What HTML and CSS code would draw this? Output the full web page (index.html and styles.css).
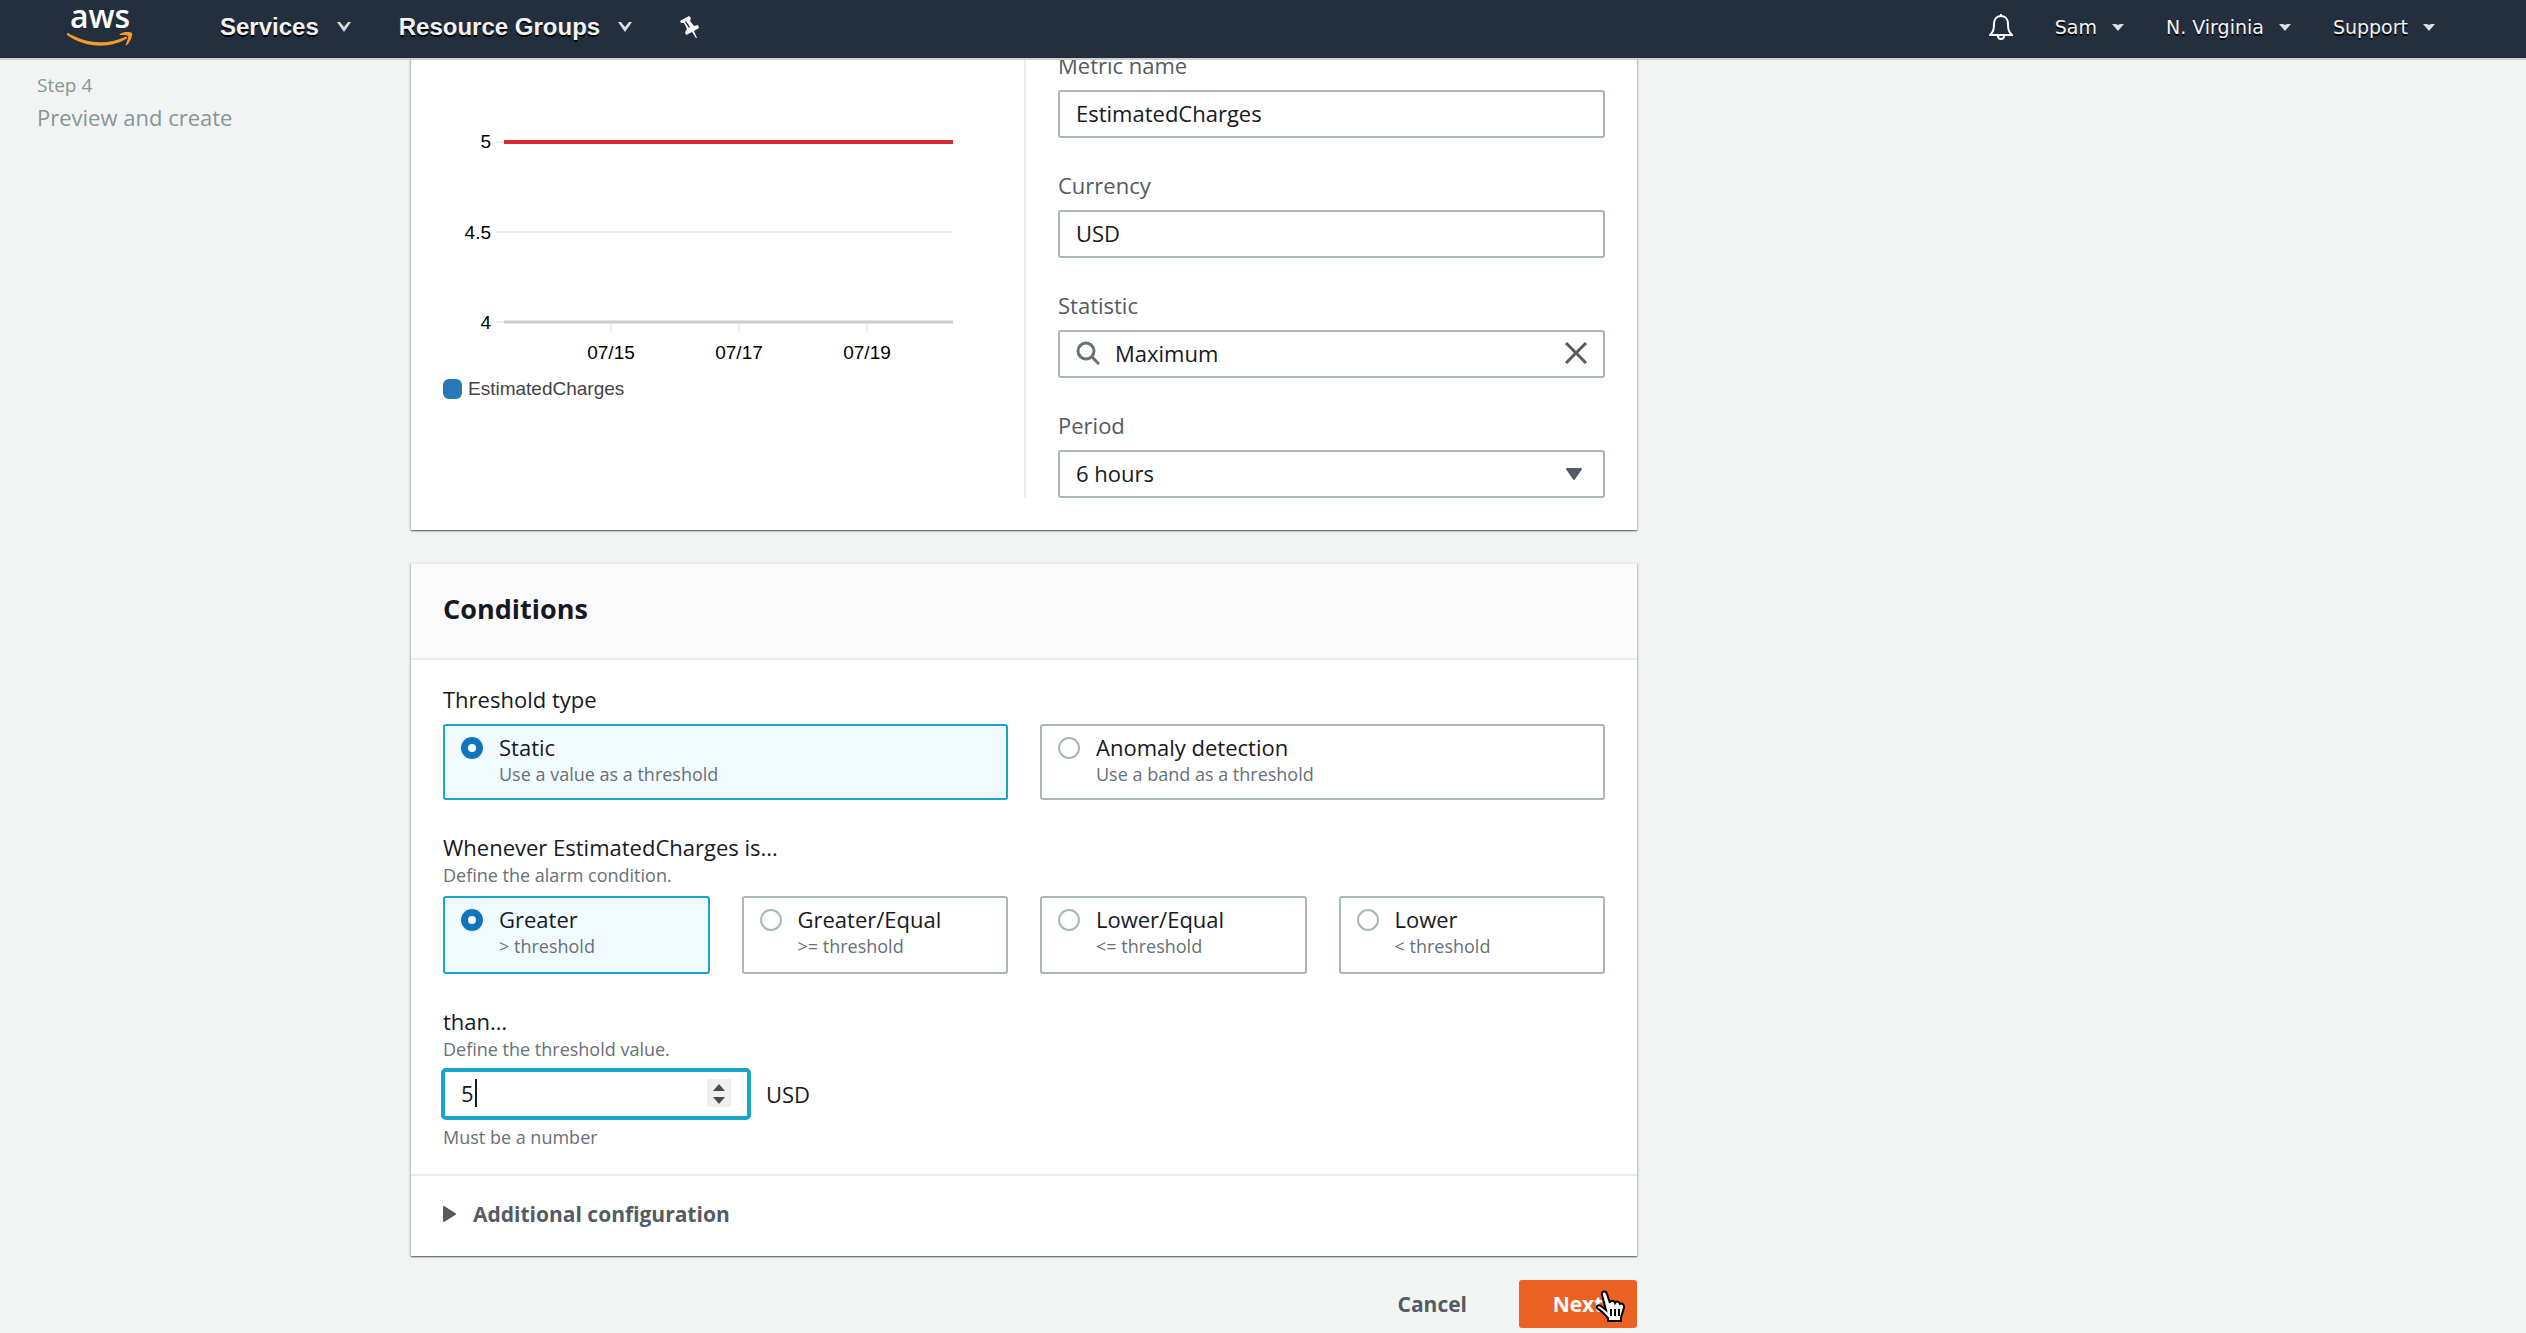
FILE: index.html
```html
<!DOCTYPE html>
<html lang="en">
<head>
<meta charset="utf-8">
<title>Create alarm</title>
<link rel="stylesheet" href="styles.css">
</head>
<body>
<header class="topnav">
  <a class="logo" href="#" aria-label="AWS home">
    <span class="logo-word">aws</span>
    <svg class="logo-smile" viewBox="0 0 66 16" aria-hidden="true"><path d="M1 1C20 12 40 13 58 5c2-1 3 1 1 2C42 17 18 16 0 3c-1-1 0-2 1-2z"/><path d="M53 2c4-3 11-2 12-1s-1 8-5 12c-1 1-2 0-1-1 1-3 3-7 2-8s-5-1-7-1c-1 0-2 0-1-1z"/></svg>
  </a>
  <nav class="nav-main">
    <button class="nav-item" type="button">Services<svg class="caret" viewBox="0 0 14 10" aria-hidden="true"><path d="M0 0h3l4 5 4-5h3L7 10z"/></svg></button>
    <button class="nav-item" type="button">Resource Groups<svg class="caret" viewBox="0 0 14 10" aria-hidden="true"><path d="M0 0h3l4 5 4-5h3L7 10z"/></svg></button>
    <button class="pin" type="button" aria-label="Pin shortcuts"><svg viewBox="0 0 20 22" aria-hidden="true"><path fill-rule="evenodd" d="M0 5L9 0l2 2-1 3 4 5 4-1 1 3-5 3 3 7-1 0-4-6-6 3-1-3 2-3-3-6-3 0zM5 6l4 6 1-1-4-6z"/></svg></button>
  </nav>
  <nav class="nav-side">
    <button class="bell" type="button" aria-label="Notifications"><svg viewBox="0 0 24 26" aria-hidden="true"><path d="M12 2c-5 0-7 4-7 8 0 6-1 8-4 11h22c-3-3-4-5-4-11 0-4-2-8-7-8zM12 0v2M9 22c0 4 6 4 6 0"/></svg></button>
    <button class="nav-link" type="button">Sam<svg class="caret-small" viewBox="0 0 12 7" aria-hidden="true"><path d="M0 0h4l2 1 2-1h4L6 7z"/></svg></button>
    <button class="nav-link" type="button">N. Virginia<svg class="caret-small" viewBox="0 0 12 7" aria-hidden="true"><path d="M0 0h4l2 1 2-1h4L6 7z"/></svg></button>
    <button class="nav-link" type="button">Support<svg class="caret-small" viewBox="0 0 12 7" aria-hidden="true"><path d="M0 0h4l2 1 2-1h4L6 7z"/></svg></button>
  </nav>
</header>

<div class="page">
  <aside class="steps">
    <div class="step-number">Step 4</div>
    <div class="step-name">Preview and create</div>
  </aside>

  <main class="content">
    <section class="card metric">
      <div class="graph">
        <svg class="chart" viewBox="0 0 520 320" role="img" aria-label="EstimatedCharges over time">
          <path class="grid" d="M53 92h8M53 182h457M53 272h8M168 274v8M296 274v8M424 274v8"/>
          <path class="axis" d="M61 272h449"/>
          <path class="threshold" d="M61 92h449"/>
          <g class="y-labels"><text x="48" y="98">5</text><text x="48" y="189">4.5</text><text x="48" y="279">4</text></g>
          <g class="x-labels"><text x="168" y="309">07/15</text><text x="296" y="309">07/17</text><text x="424" y="309">07/19</text></g>
        </svg>
        <div class="legend"><span class="swatch"></span>EstimatedCharges</div>
      </div>
      <div class="metric-form">
        <div class="field">
          <label for="metric">Metric name</label>
          <input class="control" id="metric" type="text" value="EstimatedCharges">
        </div>
        <div class="field">
          <label for="currency">Currency</label>
          <input class="control" id="currency" type="text" value="USD">
        </div>
        <div class="field">
          <label for="statistic">Statistic</label>
          <div class="control search">
            <svg class="search-icon" viewBox="0 0 24 24" aria-hidden="true"><circle cx="10" cy="10" r="8"/><path d="M16 16l7 7"/></svg>
            <input id="statistic" type="text" value="Maximum">
            <button class="clear" type="button" aria-label="Clear"><svg viewBox="0 0 22 22" aria-hidden="true"><path d="M1 1l20 20M21 1L1 21"/></svg></button>
          </div>
        </div>
        <div class="field">
          <label for="period">Period</label>
          <select class="control" id="period"><option>6 hours</option></select>
        </div>
      </div>
    </section>

    <section class="card conditions">
      <h2 class="card-title">Conditions</h2>
      <div class="card-body">
        <fieldset class="group">
          <legend class="label">Threshold type</legend>
          <div class="tiles two">
            <label class="tile"><input type="radio" name="type" checked><span><span class="tile-title">Static</span><span class="hint">Use a value as a threshold</span></span></label>
            <label class="tile"><input type="radio" name="type"><span><span class="tile-title">Anomaly detection</span><span class="hint">Use a band as a threshold</span></span></label>
          </div>
        </fieldset>
        <fieldset class="group">
          <legend class="label">Whenever EstimatedCharges is...<span class="hint">Define the alarm condition.</span></legend>
          <div class="tiles four">
            <label class="tile"><input type="radio" name="operator" checked><span><span class="tile-title">Greater</span><span class="hint">&gt; threshold</span></span></label>
            <label class="tile"><input type="radio" name="operator"><span><span class="tile-title">Greater/Equal</span><span class="hint">&gt;= threshold</span></span></label>
            <label class="tile"><input type="radio" name="operator"><span><span class="tile-title">Lower/Equal</span><span class="hint">&lt;= threshold</span></span></label>
            <label class="tile"><input type="radio" name="operator"><span><span class="tile-title">Lower</span><span class="hint">&lt; threshold</span></span></label>
          </div>
        </fieldset>
        <div class="group">
          <label class="label" for="value">than…<span class="hint">Define the threshold value.</span></label>
          <div class="value-row">
            <div class="control number">
              <input id="value" type="text" inputmode="numeric" value="5">
              <span class="text-caret"></span>
              <button class="spinner" type="button" aria-label="Change value"><svg viewBox="0 0 24 28" aria-hidden="true"><path d="M6 12l6-7 6 7zM6 18l6 7 6-7z"/></svg></button>
            </div>
            <span>USD</span>
          </div>
          <span class="hint">Must be a number</span>
        </div>
      </div>
      <button class="expander" type="button"><svg viewBox="0 0 14 16" aria-hidden="true"><path d="M1 1v14l11-7z"/></svg>Additional configuration</button>
    </section>

    <div class="actions">
      <button class="cancel" type="button">Cancel</button>
      <button class="next" type="button">Next
        <svg class="pointer" viewBox="0 0 31 34" aria-hidden="true"><path d="M11 20L7 5c-1-4 4-5 5-1l3 9c0-3 4-3 5 0 1-2 4-2 5 1 2-1 4 0 4 3-1 6-3 8-3 11v3H13v-3c-3-3-6-7-10-9-3-2 0-5 3-3z"/><path class="pointer-lines" d="M16 19v7M20 19v7M24 19v7"/></svg>
      </button>
    </div>
  </main>
</div>
</body>
</html>
```
FILE: styles.css
```css
* {
  box-sizing: border-box;
}

body {
  margin: 0;
  background: #f2f4f4;
  color: #16191f;
  font: 22px/30px "Open Sans", "Noto Sans", sans-serif;
}

button,
input,
select {
  font: inherit;
  color: inherit;
}

button {
  padding: 0;
  border: 0;
  background: none;
}

svg {
  display: block;
}

/* Top navigation */
.topnav {
  position: sticky;
  top: 0;
  z-index: 2;
  display: flex;
  height: 60px;
  padding: 0 91px 0 67px;
  border-bottom: 2px solid #cfcfcf;
  background: #232f3e;
  color: #f2f2f2;
}

.logo {
  width: 66px;
  margin-right: 87px;
  color: #fff;
  text-align: center;
  text-decoration: none;
}

.logo-word {
  display: block;
  font: 600 32px/32px "Open Sans", sans-serif;
}

.logo-smile {
  width: 66px;
  height: 16px;
  fill: #f79a2d;
}

.nav-main,
.nav-side {
  display: flex;
  align-items: center;
  height: 54px;
}

.nav-side {
  margin-left: auto;
  gap: 42px;
}

.nav-item,
.nav-link {
  display: flex;
  align-items: center;
  text-shadow: 0 2px 0 #000;
}

.nav-item {
  gap: 18px;
  margin-right: 48px;
  font: bold 24px/28px "Liberation Sans", Arial, sans-serif;
}

.nav-link {
  gap: 15px;
  font: 19px/24px "DejaVu Sans", Verdana, sans-serif;
}

.caret {
  width: 14px;
  height: 10px;
  fill: #ddd;
}

.caret-small {
  width: 12px;
  height: 7px;
  fill: #ddd;
}

.pin svg {
  width: 20px;
  height: 22px;
  fill: #fff;
}

.bell svg {
  width: 24px;
  height: 26px;
  fill: none;
  stroke: #fff;
  stroke-width: 2;
}

/* Page frame: the content scrolls beneath the navigation bar */
.page {
  display: grid;
  grid-template-columns: 411px minmax(0, 1226px);
  margin-top: -60px;
}

.steps {
  padding: 70px 37px;
  color: #879596;
}

.step-number {
  font-size: 19px;
  line-height: 30px;
}

.step-name {
  line-height: 34px;
}

.card {
  margin-bottom: 33px;
  background: #fff;
  box-shadow: 0 1px 1px rgba(0, 28, 36, .4), 1px 1px 2px rgba(0, 28, 36, .2), -1px 1px 2px rgba(0, 28, 36, .2);
}

/* Metric card */
.metric {
  display: grid;
  grid-template-columns: 1fr 1fr;
  padding: 50px 32px 32px;
}

.chart {
  width: 520px;
  height: 320px;
  fill: none;
}

.grid {
  stroke: #eee;
  stroke-width: 2;
}

.axis {
  stroke: #ccc;
  stroke-width: 3;
}

.threshold {
  stroke: #d62a2f;
  stroke-width: 4;
}

.chart text,
.legend {
  font: 19px/24px "Liberation Sans", Arial, sans-serif;
}

.chart text {
  fill: #000;
}

.y-labels {
  text-anchor: end;
}

.x-labels {
  text-anchor: middle;
}

.legend {
  display: flex;
  align-items: center;
  gap: 6px;
  margin-top: 7px;
  color: #444;
}

.swatch {
  width: 19px;
  height: 20px;
  border-radius: 6px;
  background: #2878b5;
}

.metric-form {
  display: flex;
  flex-direction: column;
  gap: 32px;
  padding-left: 32px;
  border-left: 2px solid #eaeded;
}

.field {
  display: flex;
  flex-direction: column;
  gap: 10px;
}

.field label {
  color: #545b64;
}

.control {
  width: 100%;
  height: 48px;
  padding: 0 16px 2px;
  border: 2px solid #aab7b8;
  border-radius: 3px;
  background: #fff;
}

.search,
.number {
  display: flex;
  align-items: center;
}

.search input,
.number input {
  min-width: 0;
  padding: 0;
  border: 0;
  outline: 0;
  background: none;
}

.search input {
  flex: 1;
}

.search-icon {
  width: 24px;
  height: 24px;
  margin-right: 15px;
  fill: none;
  stroke: #687078;
  stroke-width: 3;
}

.clear svg {
  width: 22px;
  height: 22px;
  fill: none;
  stroke: #545b64;
  stroke-width: 3;
}

select.control {
  appearance: none;
  background: #fff url("data:image/svg+xml,%3Csvg xmlns='http://www.w3.org/2000/svg' viewBox='0 0 16 12'%3E%3Cpath d='M1 1h14L8 11z' fill='%23545b64' stroke='%23545b64' stroke-width='2' stroke-linejoin='round'/%3E%3C/svg%3E") no-repeat right 21px center / 16px 12px;
}

/* Conditions card */
.conditions {
  margin-bottom: 24px;
  border-top: 1px solid #eaeded;
}

.card-title {
  margin: 0;
  padding: 27px 32px 31px;
  border-bottom: 2px solid #eaeded;
  background: #fafafa;
  font-size: 27px;
  line-height: 36px;
}

.card-body {
  display: flex;
  flex-direction: column;
  gap: 32px;
  padding: 24px 32px;
}

.group {
  min-width: 0;
  margin: 0;
  padding: 0;
  border: 0;
}

.label {
  display: block;
  padding: 0;
}

.hint {
  display: block;
  color: #687078;
  font-size: 18px;
  line-height: 26px;
}

.tiles {
  display: grid;
  gap: 32px;
}

.two {
  grid-template-columns: repeat(2, 1fr);
  margin-top: 10px;
}

.four {
  grid-template-columns: repeat(4, 1fr);
  margin-top: 8px;
}

.tile {
  display: flex;
  gap: 16px;
  padding: 7px 16px 13px;
  border: 2px solid #aab7b8;
  border-radius: 3px;
}

.two .tile {
  padding-bottom: 11px;
}

.tile:has(:checked) {
  border-color: #16a4cc;
  background: #f1faff;
}

.tile input {
  appearance: none;
  flex: none;
  width: 22px;
  height: 22px;
  margin: 4px 0 0;
  border: 2px solid #aab7b8;
  border-radius: 50%;
  background: #fff;
}

.tile input:checked {
  border: 7px solid #1076bc;
}

.tile-title {
  display: block;
  line-height: 28px;
}

.value-row {
  display: flex;
  align-items: center;
  gap: 17px;
  margin: 8px 0 6px;
}

.number {
  width: 306px;
  border-color: #16a4cc;
  box-shadow: 0 0 0 2px #16a4cc;
}

.number input {
  width: 14px;
}

.text-caret {
  width: 2px;
  height: 28px;
  background: #16191f;
}

.spinner {
  margin-left: auto;
  background: #f0f0f0;
}

.spinner svg {
  width: 24px;
  height: 28px;
  fill: #4b4b4b;
}

.expander {
  display: flex;
  align-items: center;
  gap: 16px;
  width: 100%;
  padding: 22px 32px 26px;
  border-top: 2px solid #eaeded;
  color: #545b64;
  font-size: 21px;
  font-weight: bold;
  line-height: 32px;
}

.expander svg {
  width: 14px;
  height: 16px;
  fill: currentColor;
  stroke: currentColor;
  stroke-width: 2;
  stroke-linejoin: round;
}

.actions {
  display: flex;
  justify-content: flex-end;
  gap: 52px;
  padding-bottom: 5px;
  font-size: 21px;
  font-weight: bold;
}

.cancel {
  color: #545b64;
}

.next {
  position: relative;
  width: 118px;
  height: 48px;
  border-radius: 3px;
  background: #eb6122;
  color: #fff;
}

.pointer {
  position: absolute;
  top: 10px;
  right: 11px;
  width: 31px;
  height: 34px;
  fill: #fff;
  stroke: #000;
  stroke-width: 2;
}

.pointer-lines {
  fill: none;
}
```
